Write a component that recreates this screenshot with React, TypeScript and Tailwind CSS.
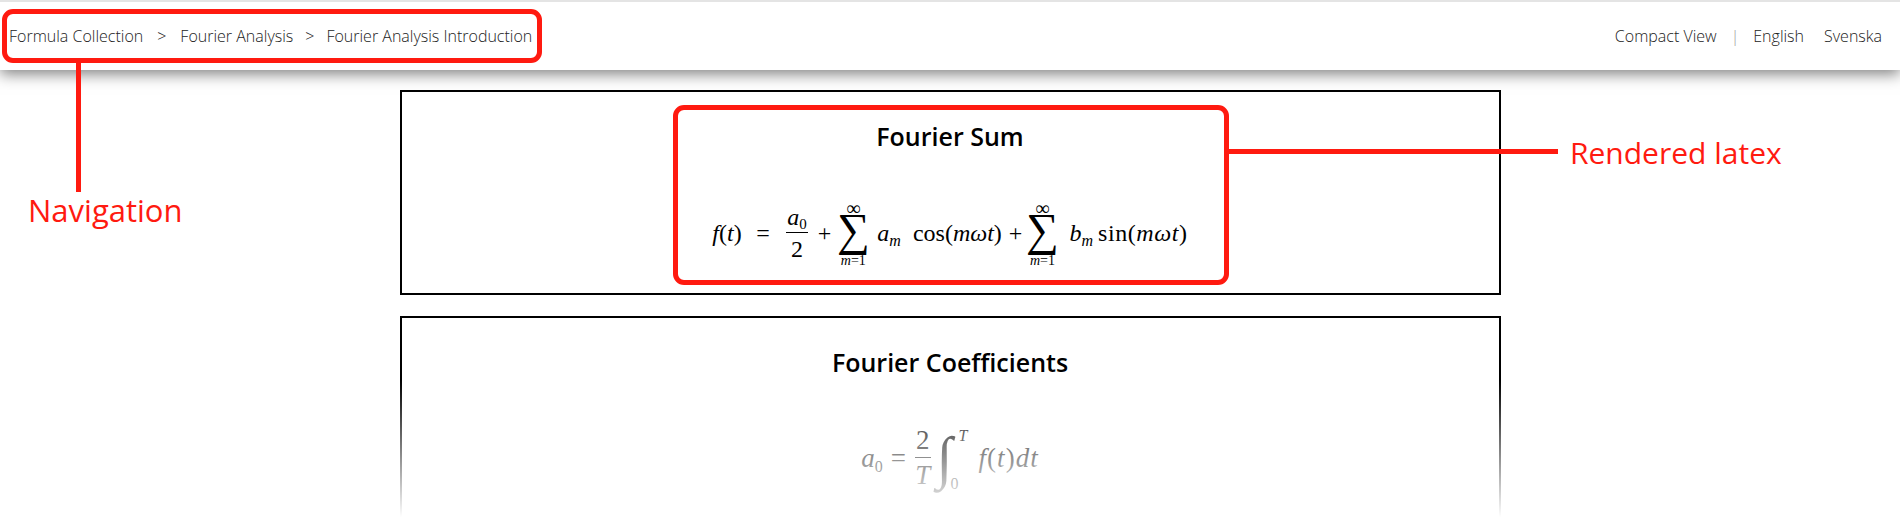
const serif = { fontFamily: '"Liberation Serif", serif' }

function Var({ children }: { children: React.ReactNode }) {
  return <span className="italic">{children}</span>
}

function Frac({ top, bottom }: { top: React.ReactNode; bottom: React.ReactNode }) {
  return (
    <span className="inline-flex flex-col items-center leading-none">
      <span className="border-b border-current px-px pb-[3px]">{top}</span>
      <span className="pt-[4px]">{bottom}</span>
    </span>
  )
}

function Sub({ children }: { children: React.ReactNode }) {
  return <span className="relative top-[5px] text-[16px] leading-none">{children}</span>
}

function Sum() {
  return (
    <span className="inline-flex w-[34px] flex-col items-center">
      <span className="relative top-[3px] text-[20px] leading-[14px]">∞</span>
      <span className="relative -top-[2px] mt-[3px] h-[34px] text-[46px] leading-[34px]">∑</span>
      <span className="relative top-[1px] mt-[4px] text-[14px] leading-[14px] whitespace-nowrap">
        <Var>m</Var>=1
      </span>
    </span>
  )
}

function FourierSum() {
  return (
    <div className="flex items-center justify-center text-[24px] text-black" style={serif}>
      <span className="w-[38px] whitespace-nowrap"><Var>f</Var>(<Var>t</Var>)</span>
      <span className="w-[36px] pl-[6px]">=</span>
      <Frac top={<span><Var>a</Var><span className="relative top-[4px] text-[15px]">0</span></span>} bottom="2" />
      <span className="ml-[10px] mr-[5px]">+</span>
      <Sum />
      <span className="ml-[7px] whitespace-nowrap"><Var>a</Var><Sub><Var>m</Var></Sub></span>
      <span className="ml-[12px] whitespace-nowrap">cos(<Var>mωt</Var>)</span>
      <span className="ml-[7px] mr-[3px]">+</span>
      <Sum />
      <span className="ml-[10px] whitespace-nowrap"><Var>b</Var><Sub><Var>m</Var></Sub></span>
      <span className="ml-[5px] tracking-[0.6px] whitespace-nowrap">sin(<Var>mωt</Var>)</span>
    </div>
  )
}

function FourierCoefficient() {
  return (
    <div className="flex items-center justify-center text-[27px] text-black" style={serif}>
      <span className="whitespace-nowrap"><Var>a</Var><Sub>0</Sub></span>
      <span className="ml-[8px] mr-[9px]">=</span>
      <Frac top="2" bottom={<Var>T</Var>} />
      <span className="relative ml-[6px] flex h-[58px] w-[36px] items-center">
        <span className="text-[58px] leading-none font-light italic">∫</span>
        <span className="absolute top-[-1px] left-[22px] text-[16px] italic leading-none">T</span>
        <span className="absolute bottom-[-5px] left-[14px] text-[16px] leading-none">0</span>
      </span>
      <span className="ml-[6px] tracking-[1px] whitespace-nowrap"><Var>f</Var>(<Var>t</Var>)<Var>dt</Var></span>
    </div>
  )
}

export default function App() {
  return (
    <div
      className="relative h-[526px] w-[1900px] overflow-hidden bg-white"
      style={{ fontFamily: '"Open Sans", sans-serif' }}
    >
      <header className="relative z-10 flex h-[70px] items-center justify-between border-t-2 border-[#e4e4e4] bg-white pr-[18px] pl-[9px] text-[16px] font-light text-[#222] shadow-[0_4px_14px_rgba(0,0,0,0.5)]">
        <nav className="flex items-center">
          <span>Formula Collection</span>
          <span className="mx-[14px]">&gt;</span>
          <span>Fourier Analysis</span>
          <span className="mx-[12px]">&gt;</span>
          <span>Fourier Analysis Introduction</span>
        </nav>
        <div className="flex items-center">
          <span>Compact View</span>
          <span className="mx-[14px] text-[#999]">|</span>
          <span>English</span>
          <span className="ml-[20px]">Svenska</span>
        </div>
      </header>

      <main className="flex flex-col items-center gap-[21px] pt-[20px]">
        <section className="h-[205px] w-[1101px] border-2 border-black pt-[29px]">
          <h2 className="text-center text-[25px] leading-[30px] font-semibold text-black">Fourier Sum</h2>
          <div className="mt-[47px]">
            <FourierSum />
          </div>
        </section>
        <section className="h-[400px] w-[1101px] border-2 border-black pt-[29px]">
          <h2 className="text-center text-[25px] leading-[30px] font-semibold text-black">Fourier Coefficients</h2>
          <div className="mt-[50px]">
            <FourierCoefficient />
          </div>
        </section>
      </main>

      {/* fade at the bottom of the page */}
      <div className="absolute inset-x-0 bottom-0 z-20 h-[146px] bg-linear-to-b from-transparent to-white to-[94%]" />

      {/* annotations */}
      <div className="absolute top-[9px] left-[2px] z-30 h-[54px] w-[540px] rounded-[11px] border-[5px] border-[#ff1a10]" />
      <div className="absolute top-[62px] left-[76px] z-30 h-[130px] w-[5px] bg-[#ff1a10]" />
      <span className="absolute top-[190px] left-[28px] z-30 text-[31px] leading-[40px] text-[#ff1a10]">Navigation</span>

      <div className="absolute top-[105px] left-[673px] z-30 h-[180px] w-[556px] rounded-[11px] border-[5px] border-[#ff1a10]" />
      <div className="absolute top-[149px] left-[1228px] z-30 h-[5px] w-[330px] bg-[#ff1a10]" />
      <span className="absolute top-[133px] left-[1570px] z-30 text-[30px] leading-[40px] text-[#ff1a10]">Rendered latex</span>
    </div>
  )
}
